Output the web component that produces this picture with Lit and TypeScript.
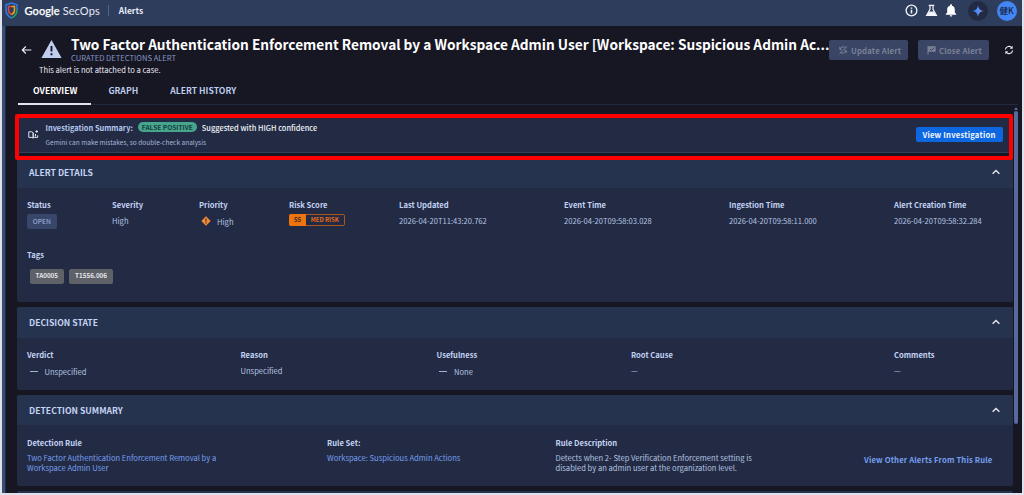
import { LitElement, html, css, svg } from "lit";
import { customElement, property } from "lit/decorators.js";

const chevron = html`<svg width="10" height="8" viewBox="0 0 10 8" fill="none" stroke="#e4e8f2" stroke-width="1.4"><path d="M1.6 5.7 5 2.4 8.4 5.7" /></svg>`;
const gear = svg`<path d="M2.2 4.3A3.2 3.2 0 0 1 7.8 3M7.8 5.7A3.2 3.2 0 0 1 2.2 7" />`;

@customElement("detail-card")
class DetailCard extends LitElement {
  @property() heading = "";

  static styles = css`
    :host {
      display: flex;
      flex-direction: column;
      flex: none;
      border-radius: 2px;
      background: #222b43;
      overflow: hidden;
    }
    .head {
      display: flex;
      align-items: center;
      justify-content: space-between;
      flex: none;
      height: 30.5px;
      box-sizing: border-box;
      padding: 0 12px 0 12px;
      background: #26334e;
      color: #c5d4f5;
      font-size: 8.64px;
      font-weight: 700;
      line-height: 12px;
    }
    svg {
      display: block;
    }
  `;

  render() {
    return html`<div class="head"><span>${this.heading}</span>${chevron}</div>
      <slot></slot>`;
  }
}

@customElement("app-root")
class AppRoot extends LitElement {
  static styles = css`
    :host {
      display: block;
      width: 1024px;
      height: 495px;
      overflow: hidden;
      box-sizing: border-box;
      padding: 0 2px 2px 1.5px;
      background: #dfe2ea;
      color: #b5c3e2;
      font-family: "Noto Sans CJK JP", "Noto Sans", sans-serif;
      font-size: 7.6px;
      line-height: 11px;
      white-space: nowrap;
    }
    svg {
      display: block;
      flex: none;
    }
    .window {
      display: flex;
      flex-direction: column;
      height: 493px;
      background: #171623;
    }
    .topbar {
      display: flex;
      align-items: center;
      flex: none;
      height: 25.5px;
      box-sizing: border-box;
      padding: 0 5.5px 4px 3px;
      background: #2f3d5c;
    }
    .brand {
      margin-left: 7px;
      color: #e6ebf7;
      font: 11px/16px Lato, "Open Sans", sans-serif;
      letter-spacing: 0.1px;
    }
    .brand b {
      font-weight: 500;
      color: #fff;
      -webkit-text-stroke: 0.25px #fff;
    }
    .rule {
      width: 1px;
      height: 11px;
      margin: 0 10px 0 8px;
      background: #51628b;
    }
    .section {
      color: #e6ecfa;
      font-size: 8.5px;
      font-weight: 700;
    }
    .tools {
      display: flex;
      align-items: center;
      margin-left: auto;
    }
    .spark,
    .avatar {
      display: flex;
      align-items: center;
      justify-content: center;
      width: 20px;
      height: 20px;
      border-radius: 50%;
      background: #222b43;
    }
    .spark {
      margin: 0 8.5px 0 11px;
    }
    .avatar {
      background: #4285f4;
      color: #17223d;
      font-size: 8.5px;
      font-weight: 500;
    }
    .main {
      display: flex;
      flex-direction: column;
      flex: 1;
      min-height: 0;
      border-left: 3.5px solid #3a4e74;
      box-shadow: inset 1px 0 #222b45;
    }
    .titlebar {
      display: flex;
      height: 54px;
      flex: none;
    }
    .back {
      margin: 19px 0 0 16px;
    }
    .warn {
      margin: 13.5px 0 0 9px;
    }
    .titles {
      margin: 9px 0 0 9.5px;
      width: 759px;
      flex: none;
    }
    .title {
      color: #fff;
      font-size: 13.68px;
      font-weight: 700;
      line-height: 19px;
    }
    .kind {
      margin-top: -2px;
      color: #8497c4;
      line-height: 11px;
    }
    .case {
      margin: 1px 0 0 -32px;
      color: #e8ebf3;
      line-height: 11px;
    }
    .actions {
      display: flex;
      align-items: center;
      margin: 14.5px 0 0 -1.5px;
      height: 20px;
    }
    .btn {
      display: flex;
      align-items: center;
      box-sizing: border-box;
      height: 20px;
      padding-left: 9px;
      gap: 3.5px;
      border-radius: 2px;
      background: #3a4566;
      color: #7b8195;
      font-weight: 700;
      font-size: 7.7px;
      letter-spacing: 0.2px;
    }
    .update {
      width: 79px;
    }
    .close {
      width: 71px;
      margin: 0 15px 0 10px;
    }
    .tabs {
      display: flex;
      flex: none;
      height: 25px;
      box-sizing: border-box;
      margin: 0 4px 0 13.5px;
      border-bottom: 1.5px solid #20293f;
      color: #bccbec;
      font-size: 8.65px;
      font-weight: 700;
      line-height: 20px;
    }
    .tab {
      height: 25px;
      box-sizing: border-box;
      padding: 0 15px 0 17px;
    }
    .tab.on {
      padding: 0 14px 0 15px;
      color: #fff;
      border-bottom: 2px solid #e2e4ea;
    }
    .scroll {
      display: flex;
      flex: 1;
      min-height: 0;
      overflow: hidden;
      padding-left: 12.5px;
    }
    .cards {
      display: flex;
      flex-direction: column;
      gap: 5px;
      width: 995.5px;
      padding-top: 9px;
    }
    .track {
      display: flex;
      flex-direction: column;
      align-items: center;
      width: 4px;
      margin-left: 1px;
      padding-top: 2px;
    }
    .thumb {
      width: 4px;
      height: 313px;
      margin-top: 1.5px;
      border-radius: 2px;
      background: #576a9e;
    }
    .frame {
      display: flex;
      flex: none;
      height: 46.5px;
      box-sizing: border-box;
      margin: 0 0 -8px -2.5px;
      border: 4px solid #fe0000;
      border-radius: 2px;
      z-index: 1;
      background: #171623;
    }
    .summary {
      display: flex;
      flex: 1;
      height: 35px;
      box-sizing: border-box;
      border-bottom: 1px solid #303e5b;
      background: #222b43;
    }
    .book {
      margin: 12px 0 0 9px;
    }
    .notes {
      margin: 4px 0 0 7px;
      flex: 1;
    }
    .line {
      display: flex;
      align-items: center;
      height: 11px;
      color: #b6c8f0;
      font-weight: 700;
      font-size: 7.4px;
    }
    .pill {
      display: flex;
      align-items: center;
      height: 9.5px;
      width: 59px;
      justify-content: center;
      margin: 0 5px 0 5px;
      border-radius: 5px;
      background: #46a58c;
      color: #163b42;
      font-size: 6.55px;
      font-weight: 700;
      line-height: 9px;
    }
    .bright {
      color: #f1f3f8;
      font-size: 7.45px;
      font-weight: 500;
    }
    .hint {
      margin-top: 4px;
      font-size: 6.55px;
      color: #a4b5da;
    }
    .view {
      width: 87px;
      height: 15px;
      margin: 9px 6px 0 0;
      border-radius: 2px;
      background: #0c67e0;
      color: #f2f6ff;
      text-align: center;
      font-size: 7.7px;
      font-weight: 700;
      letter-spacing: 0.2px;
      line-height: 15px;
    }
    .details {
      height: 145px;
    }
    .decision {
      height: 82.5px;
    }
    .detection {
      height: 91px;
    }
    .more {
      height: 20px;
      flex: none;
    }
    .row {
      display: grid;
      padding-left: 10px;
    }
    .details .row {
      grid-template-columns: 85px 87px 90px 110px 165px 165px 165px 1fr;
      padding-top: 11.5px;
      height: 38px;
    }
    .decision .row {
      grid-template-columns: 213.5px 196px 194.5px 263px 1fr;
      padding-top: 11.5px;
    }
    .detection .row {
      grid-template-columns: 300px 228.5px 1fr 148.5px;
      padding-top: 11.5px;
    }
    .label {
      color: #c3d2f3;
      font-size: 7.62px;
      font-weight: 700;
    }
    .value {
      margin-top: 4.5px;
    }
    .lower {
      display: flex;
      align-items: center;
      margin-top: 5.5px;
    }
    .diamond {
      margin: 0 6.5px 0 1.5px;
    }
    .dash {
      width: 8px;
      height: 1px;
      margin: 0 7px 0 2.5px;
      background: #a3b1ce;
    }
    .status {
      width: 29.5px;
      height: 15px;
      margin-top: 4px;
      border-radius: 2px;
      background: #374669;
      text-align: center;
      font-size: 6.7px;
      line-height: 14px;
      color: #a9bbe2;
    }
    .risk {
      display: flex;
      width: 55.5px;
      height: 12px;
      box-sizing: border-box;
      margin-top: 4px;
      border: 1px solid #a9571d;
      border-radius: 2px;
      color: #e9691a;
      font-size: 5.95px;
      font-weight: 700;
      line-height: 10px;
      text-align: center;
    }
    .risk b {
      width: 17px;
      margin: -1px 0 -1px -1px;
      border-radius: 2px 0 0 2px;
      background: #ee7410;
      color: #54331c;
      line-height: 12px;
    }
    .risk span {
      flex: 1;
    }
    .tags {
      padding: 11.5px 0 0 10px;
    }
    .chips {
      display: flex;
      gap: 5px;
      margin: 9.5px 0 0 2.5px;
    }
    .chip {
      height: 15px;
      padding: 0 6px;
      border-radius: 2px;
      background: #5e6167;
      color: #e3e5ea;
      font-size: 6.3px;
      font-weight: 700;
      line-height: 14.5px;
    }
    .link {
      color: #779ff2;
    }
    .others {
      padding-top: 17.5px;
      font-size: 7.7px;
      font-weight: 700;
      letter-spacing: 0.15px;
    }
    .wrap {
      margin-top: 5px;
      line-height: 10.6px;
      white-space: pre-line;
    }
  `;

  private field(label: string, value: unknown) {
    return html`<div><div class="label">${label}</div>${value}</div>`;
  }

  private text(value: string) {
    return html`<div class="value">${value}</div>`;
  }

  render() {
    return html`<div class="window">
      <div class="topbar">
        <svg width="13" height="17" viewBox="0 0 13 17" fill="none">
          <path d="M6.5 1 1 2.8V8c0 3.900 2.200 6.500 5.500 8" stroke="#2d7be8" stroke-width="1.500" />
          <path d="M6.500 1 12 2.800V8" stroke="#2d7be8" stroke-width="1.500" />
          <path d="M12 7.500C12 11.700 9.800 14.500 6.500 16" stroke="#1fa463" stroke-width="1.500" />
          <path d="M6.500 4.500H3.500V8c0 2.200 1.100 3.700 3 4.700" stroke="#ea4335" stroke-width="1.500" />
          <path d="M6.500 4.500h3V8c0 2.200-1.100 3.700-3 4.700" stroke="#f0a51c" stroke-width="1.500" />
        </svg>
        <span class="brand"><b>Google</b> SecOps</span>
        <span class="rule"></span>
        <span class="section">Alerts</span>
        <div class="tools">
          <svg width="13" height="13" viewBox="0 0 13 13" fill="none" stroke="#f4f6fb">
            <circle cx="6.500" cy="6.500" r="5.400" stroke-width="1.300" />
            <path d="M6.500 5.800v3.700M6.500 3.400v1.400" stroke-width="1.500" />
          </svg>
          <svg style="margin-left:7px" width="13" height="13" viewBox="0 0 13 13" fill="none" stroke="#f4f6fb" stroke-width="1.200">
            <path d="M3.700 1.400h5.600M5 1.500v3.800L1.600 11.300h9.800L8 5.300V1.500" />
            <path d="M4.700 8.200h3.600l1.700 2.500H3z" fill="#f4f6fb" />
          </svg>
          <svg style="margin-left:7px" width="12" height="13" viewBox="0 0 12 13" fill="#fff">
            <path d="M6 .3c.6 0 1 .4 1 1v.4c1.800.4 2.800 1.800 2.800 3.700v3L11.200 10v.7H.8V10l1.400-1.600v-3c0-1.900 1-3.300 2.800-3.700v-.4c0-.6.4-1 1-1zM4.700 11.300h2.600C7.300 12 6.700 12.600 6 12.600S4.700 12 4.700 11.300z" />
          </svg>
          <div class="spark">
            <svg width="12" height="12" viewBox="0 0 12 12">
              <defs><linearGradient id="g"><stop offset=".2" stop-color="#2592ff" /><stop offset="1" stop-color="#a887dd" /></linearGradient></defs>
              <path fill="url(#g)" d="M6 .3C6.400 3.800 8.200 5.600 11.700 6 8.200 6.400 6.400 8.200 6 11.700 5.600 8.200 3.800 6.400.3 6 3.800 5.600 5.600 3.800 6 .3z" />
            </svg>
          </div>
          <div class="avatar">健K</div>
        </div>
      </div>
      <div class="main">
        <div class="titlebar">
          <svg class="back" width="11" height="10" viewBox="0 0 11 10" fill="none" stroke="#f0f2f8" stroke-width="1.100">
            <path d="M10.300 5H1.500M4.800 1.500 1.300 5l3.500 3.500" />
          </svg>
          <svg class="warn" width="21" height="20" viewBox="0 0 21 20">
            <path d="M10.500 1 20.600 19H.4z" fill="#bfcdef" />
            <path d="M10.500 7v5.500M10.500 14.300v2" stroke="#171623" stroke-width="1.900" />
          </svg>
          <div class="titles">
            <div class="title">Two Factor Authentication Enforcement Removal by a Workspace Admin User [Workspace: Suspicious Admin Ac...</div>
            <div class="kind">CURATED DETECTIONS ALERT</div>
            <div class="case">This alert is not attached to a case.</div>
          </div>
          <div class="actions">
            <div class="btn update">
              <svg width="10" height="10" viewBox="0 0 10 10" fill="none" stroke="#7b8195" stroke-width="1">
                ${gear}<path d="M1.500 8.800 9 1.500M1.800 1.800v2.500h2M8.300 8V5.700H6.500" />
              </svg>Update Alert
            </div>
            <div class="btn close">
              <svg width="9" height="10" viewBox="0 0 9 10">
                <path d="M.5 1h1v8.500h-1zM1.500 1.300H8.700V6.800H1.500z" fill="#7b8195" />
                <path d="M3 4l1.400 1.400L7.300 2.700" fill="none" stroke="#3a4566" />
              </svg>Close Alert
            </div>
            <svg width="10" height="10" viewBox="0 0 10 10" fill="none" stroke="#eceef4" stroke-width="1.200">
              <path d="M1.400 4.500A3.600 3.600 0 0 1 7.900 2.900M8.600 5.500A3.600 3.600 0 0 1 2.100 7.100" />
              <path d="M8.600 .8v2.900H5.800zM1.400 9.200V6.300h2.800z" fill="#eceef4" stroke="none" />
            </svg>
          </div>
        </div>
        <div class="tabs">
          <div class="tab on">OVERVIEW</div>
          <div class="tab">GRAPH</div>
          <div class="tab">ALERT HISTORY</div>
        </div>
        <div class="scroll">
          <div class="cards">
            <div class="frame">
              <div class="summary">
                <svg class="book" width="11" height="10" viewBox="0 0 11 10" fill="none" stroke="#dfe4ef">
                  <path d="M.8 1.800h3l1.400 1V8L3.900 7.400H.8zM5.200 8l1.300-.6h3.200V5.300M5.200 2.800v5" />
                  <path d="M8.700.2v2.600M7.400 1.500H10M7.500 4v2.500" stroke-width="1.100" />
                </svg>
                <div class="notes">
                  <div class="line">Investigation Summary:<span class="pill">FALSE POSITIVE</span><span class="bright">Suggested with HIGH confidence</span></div>
                  <div class="hint">Gemini can make mistakes, so double-check analysis</div>
                </div>
                <div class="view">View Investigation</div>
              </div>
            </div>
            <detail-card class="details" heading="ALERT DETAILS">
              <div class="row">
                ${this.field("Status", html`<div class="status">OPEN</div>`)}
                ${this.field("Severity", this.text("High"))}
                ${this.field("Priority", html`<div class="lower">
                  <svg class="diamond" width="10" height="10" viewBox="0 0 10 10">
                    <path d="M5 .3 9.700 5 5 9.700.3 5z" fill="#f58a35" />
                    <path d="M5 2.600v2.900M5 6.300v1.200" stroke="#222b43" stroke-width="1.100" />
                  </svg>High</div>`)}
                ${this.field("Risk Score", html`<div class="risk"><b>55</b><span>MED RISK</span></div>`)}
                ${this.field("Last Updated", this.text("2026-04-20T11:43:20.762"))}
                ${this.field("Event Time", this.text("2026-04-20T09:58:03.028"))}
                ${this.field("Ingestion Time", this.text("2026-04-20T09:58:11.000"))}
                ${this.field("Alert Creation Time", this.text("2026-04-20T09:58:32.284"))}
              </div>
              <div class="tags">
                <div class="label">Tags</div>
                <div class="chips"><span class="chip">TA0005</span><span class="chip">T1556.006</span></div>
              </div>
            </detail-card>
            <detail-card class="decision" heading="DECISION STATE">
              <div class="row">
                ${this.field("Verdict", html`<div class="lower"><i class="dash"></i>Unspecified</div>`)}
                ${this.field("Reason", this.text("Unspecified"))}
                ${this.field("Usefulness", html`<div class="lower"><i class="dash"></i>None</div>`)}
                ${this.field("Root Cause", this.text("—"))}
                ${this.field("Comments", this.text("—"))}
              </div>
            </detail-card>
            <detail-card class="detection" heading="DETECTION SUMMARY">
              <div class="row">
                ${this.field("Detection Rule", html`<div class="value wrap link">Two Factor Authentication Enforcement Removal by a
Workspace Admin User</div>`)}
                ${this.field("Rule Set:", html`<div class="value wrap link">Workspace: Suspicious Admin Actions</div>`)}
                ${this.field("Rule Description", html`<div class="value wrap">Detects when 2- Step Verification Enforcement setting is
disabled by an admin user at the organization level.</div>`)}
                <div class="others link">View Other Alerts From This Rule</div>
              </div>
            </detail-card>
            <detail-card class="more"></detail-card>
          </div>
          <div class="track">
            <svg width="4" height="3" viewBox="0 0 4 3"><path d="M2 0 4 3H0z" fill="#576a9e" /></svg>
            <div class="thumb"></div>
          </div>
        </div>
      </div>
    </div>`;
  }
}
